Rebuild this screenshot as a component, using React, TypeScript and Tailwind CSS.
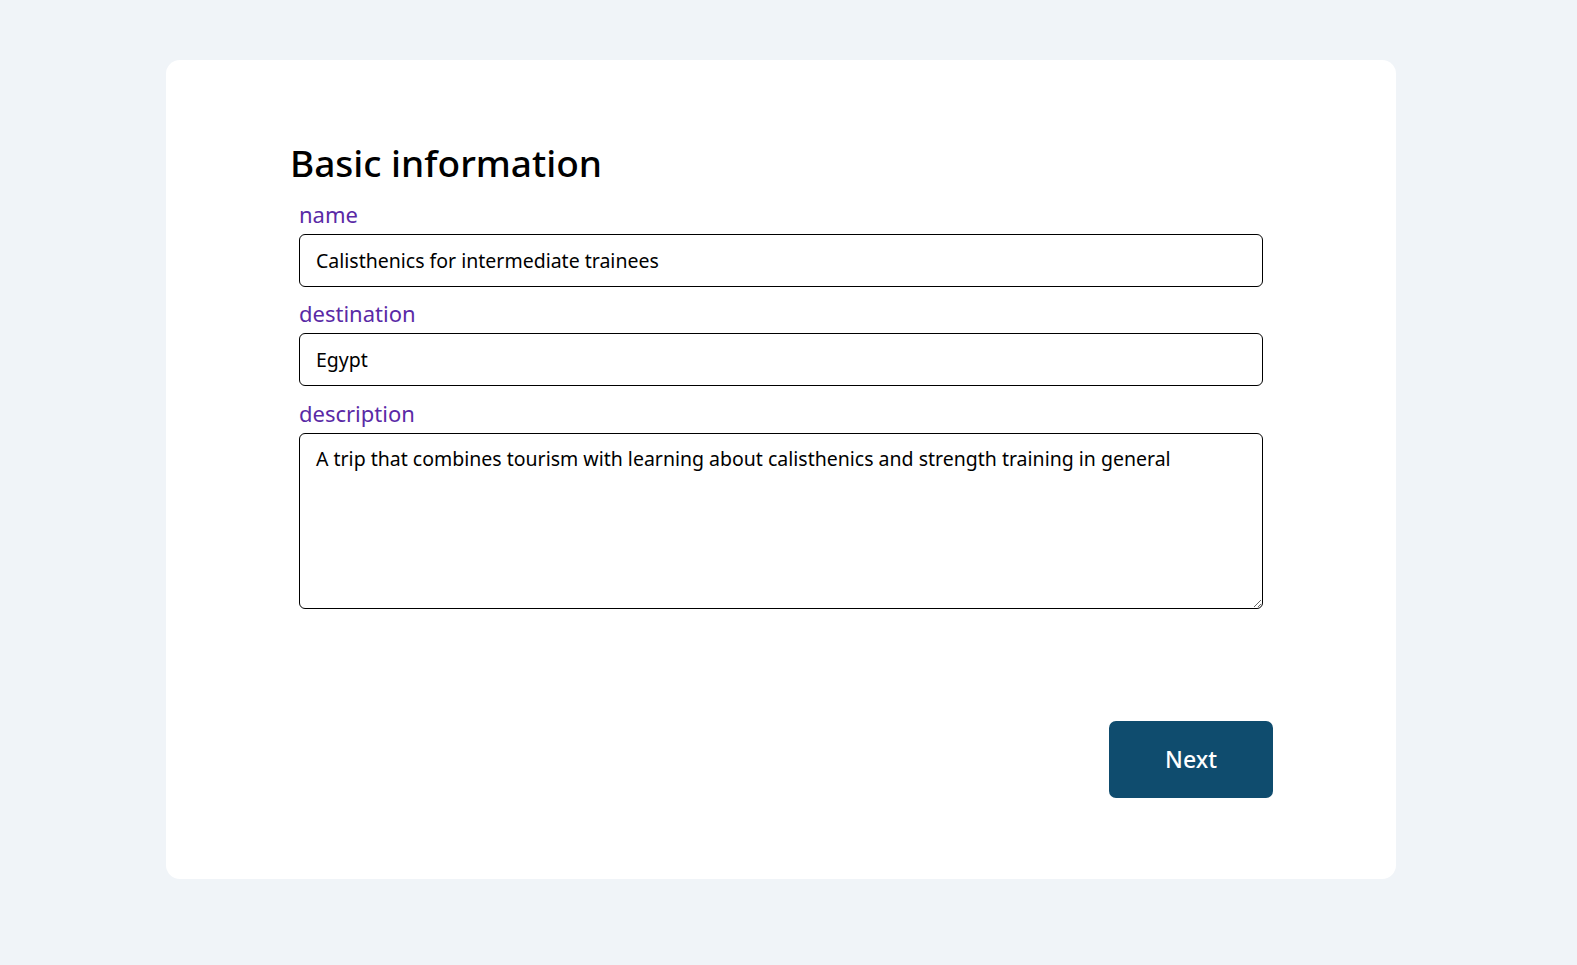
import React, { useState } from 'react';

const font = { fontFamily: '"Noto Sans", "Open Sans", sans-serif' };

export default function App() {
    const [name, setName] = useState('Calisthenics for intermediate trainees');
    const [destination, setDestination] = useState('Egypt');
    const [description, setDescription] = useState(
        'A trip that combines tourism with learning about calisthenics and strength training in general'
    );

    return (
        <div className="min-h-screen bg-[#f0f4f8] pt-[60px] pb-[86px]" style={font}>
            <div className="ml-[166px] w-[1230px] h-[819px] bg-white rounded-[14px] pl-[124px] pr-[123px] pt-[78px] flex flex-col">
                <h1 className="text-[37px] leading-[50px] font-medium text-black">Basic information</h1>

                <div className="ml-[9px] w-[964px] flex flex-col">
                    <label className="text-[22px] leading-[30px] text-[#5a2aa6] mt-[11px]">name</label>
                    <input
                        value={name}
                        onChange={e => setName(e.target.value)}
                        className="mt-[5px] h-[53px] border border-black rounded-[6px] px-4 text-[19.5px] text-black outline-none"
                    />

                    <label className="text-[22px] leading-[30px] text-[#5a2aa6] mt-[11px]">destination</label>
                    <input
                        value={destination}
                        onChange={e => setDestination(e.target.value)}
                        className="mt-[5px] h-[53px] border border-black rounded-[6px] px-4 text-[19.5px] text-black outline-none"
                    />

                    <label className="text-[22px] leading-[30px] text-[#5a2aa6] mt-[12px]">description</label>
                    <textarea
                        value={description}
                        onChange={e => setDescription(e.target.value)}
                        className="mt-[5px] h-[176px] border border-black rounded-[6px] px-4 pt-[11px] pb-[8px] text-[19.5px] leading-[28px] text-black outline-none resize-y"
                    />
                </div>

                <div className="flex justify-end mt-[112px]">
                    <button className="w-[164px] h-[77px] rounded-[7px] bg-[#0f4c6e] text-white text-[23px] font-medium">
                        Next
                    </button>
                </div>
            </div>
        </div>
    );
}
